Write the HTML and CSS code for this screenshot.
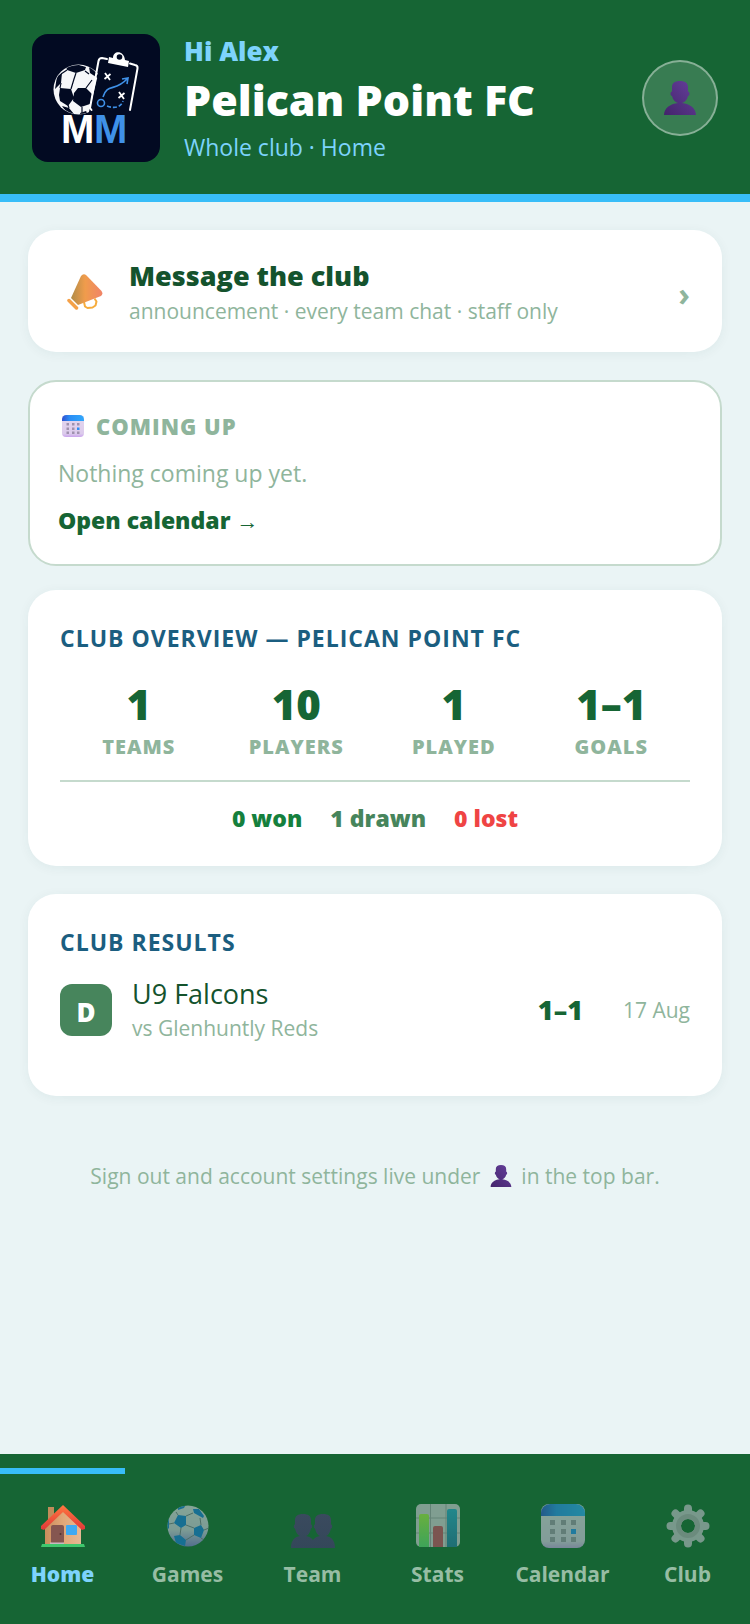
FILE: index.html
```html
<!DOCTYPE html>
<html lang="en">
<head>
  <meta charset="UTF-8" />
  <meta name="viewport" content="width=device-width, initial-scale=1.0"/>
  <title>Pelican Point FC</title>
  <link rel="stylesheet" href="styles.css">
</head>
<body>

  <!-- shared icons -->
  <svg class="sprite" aria-hidden="true">
    <defs>
      <linearGradient id="purple" x1="0" y1="1" x2="1" y2="0">
        <stop offset="0" stop-color="#43246b"/><stop offset="1" stop-color="#66409c"/>
      </linearGradient>
      <linearGradient id="calTop" x1="0" y1="0" x2="1" y2="0">
        <stop offset="0" stop-color="#2f50d0"/><stop offset=".35" stop-color="#2b8df5"/><stop offset="1" stop-color="#30a8fc"/>
      </linearGradient>
      <linearGradient id="calBody" x1="0" y1="0" x2="0" y2="1">
        <stop offset="0" stop-color="#e4d8ee"/><stop offset=".85" stop-color="#dccbec"/><stop offset="1" stop-color="#c9a3ec"/>
      </linearGradient>
    </defs>
    <symbol id="person" viewBox="0 0 32 34">
      <path fill="url(#purple)" d="M8 6C8 2 11 0 16 0s8 2 8 6v4.500c2 0 2 4.500 0 4.500-.8 4-3.500 6.500-6 7 8 .7 14 5.500 14 12H0c0-6.500 6-11.300 14-12-2.500-.5-5.200-3-6-7-2 0-2-4.500 0-4.500z"/>
    </symbol>
    <symbol id="calendar" viewBox="0 0 44 44">
      <rect width="44" height="44" rx="8" fill="url(#calBody)"/>
      <path fill="url(#calTop)" d="M0 12V9a9 9 0 0 1 9-9h26a9 9 0 0 1 9 9v3z"/>
      <path fill="#9f91ae" d="M9 16h5v5H9zM20 16h5v5h-5zM30 16h5v5h-5zM9 25h5v5H9zM20 25h5v5h-5zM9 33h5v5H9zM20 33h5v5h-5zM30 33h5v5h-5z"/>
      <path fill="#2b8df5" d="M30 25h5v5h-5z"/>
    </symbol>
  </svg>

  <header class="topbar">
    <svg class="logo" viewBox="0 0 128 128" role="img" aria-label="Club logo">
      <defs><clipPath id="logoBall"><circle cx="46.500" cy="55.500" r="24.500"/></clipPath></defs>
      <rect width="128" height="128" rx="16" fill="#020a22"/>
      <circle cx="46.500" cy="55.500" r="25" fill="#f6f7f9"/>
      <g clip-path="url(#logoBall)">
        <path fill="#020a22" d="M34 32l10-2 10 3-1 3-9 3-9-3zM25 42l5-3-1 10-6 6zM28 54l11 1 3 9-6 8-8-5-1-6zM46 54l8 0 7 7-3 9-9 3-8-6 1-8zM57 33l10 3v9l-9-6zM30 72l7 2 5 6-5 2zM48 79l6-2 3 5-8 2z"/>
        <path fill="none" stroke="#020a22" stroke-width="1.200" d="M44 39l-2 6-3 10M35 36l-6 4M53 37l4 3M54 54l6-8M29 49l-1 5M37 74l-1-3M50 73v6"/>
      </g>
      <path fill="#020a22" d="M70 24l36 7-9 51H56z"/>
      <path fill="none" stroke="#fff" stroke-width="2" stroke-linecap="round" d="M75 25l-5-1q-3 0-3.500 3L58 74l1.500 2M98 29.500l5 1.500q3 .5 2.500 3.500L98 76"/>
      <path fill="#fff" d="M77 23l4 1c0-8 11-8 12 2l4 1-1 6-20-4z"/>
      <circle cx="87.500" cy="23" r="2.800" fill="#020a22"/>
      <path stroke="#fff" stroke-width="1.800" d="M73 39l5 7M78.500 40l-6 5M87 58l5 7M92.500 59l-6 5"/>
      <g fill="none" stroke="#3f91e8" stroke-width="1.600">
        <path d="M71 63c4-14 12-5 24-18M90 45l6-1-1 6"/>
        <circle cx="69" cy="69" r="3.500"/>
        <path stroke-dasharray="4 2" d="M75 72c8 3 14 1 16-5"/>
      </g>
      <text class="logo-m" x="29" y="109">M</text>
      <text class="logo-m logo-m-blue" x="62" y="109">M</text>
    </svg>
    <div class="club">
      <div class="greeting">Hi Alex</div>
      <h1>Pelican Point FC</h1>
      <div class="scope">Whole club · Home</div>
    </div>
    <button class="account" aria-label="Account"><svg><use href="#person"/></svg></button>
  </header>

  <main>
    <button class="card message">
      <svg class="megaphone" viewBox="0 0 36 36">
        <defs>
          <linearGradient id="horn">
            <stop offset="0" stop-color="#b08c48"/><stop offset=".45" stop-color="#f09c4c"/><stop offset="1" stop-color="#f08468"/>
          </linearGradient>
        </defs>
        <path fill="none" stroke="#f6ac3c" stroke-width="2" stroke-linejoin="round" d="M17 28l1 4.500 2.500 1.500 5-.5 3-2 1-4-2-3"/>
        <path fill="url(#horn)" d="M14 2Q16.500-1 19.500 1.500L34.500 17q2 3-.5 5L11 31 4 24z"/>
        <path fill="none" stroke="#f5a148" stroke-width="3.500" stroke-linecap="round" d="M2 26.500l7.500 7.500"/>
      </svg>
      <span class="message-text">
        <span class="message-title">Message the club</span>
        <span class="small">announcement · every team chat · staff only</span>
      </span>
      <span class="chevron">›</span>
    </button>

    <section class="card upcoming">
      <h2><svg><use href="#calendar"/></svg>COMING UP</h2>
      <p>Nothing coming up yet.</p>
      <a href="#calendar-page">Open calendar <span class="arrow">→</span></a>
    </section>

    <section class="card">
      <h2>CLUB OVERVIEW — PELICAN POINT FC</h2>
      <div class="stats">
        <div class="stat"><b>1</b><span>TEAMS</span></div>
        <div class="stat"><b>10</b><span>PLAYERS</span></div>
        <div class="stat"><b>1</b><span>PLAYED</span></div>
        <div class="stat"><b>1–1</b><span>GOALS</span></div>
      </div>
      <div class="record">
        <span class="won">0 won</span>
        <span class="drawn">1 drawn</span>
        <span class="lost">0 lost</span>
      </div>
    </section>

    <section class="card">
      <h2>CLUB RESULTS</h2>
      <div class="result">
        <span class="badge">D</span>
        <div class="fixture">
          <div class="team">U9 Falcons</div>
          <div class="small">vs Glenhuntly Reds</div>
        </div>
        <span class="score">1–1</span>
        <span class="small">17 Aug</span>
      </div>
    </section>

    <p class="note">Sign out and account settings live under <svg><use href="#person"/></svg> in the top bar.</p>
  </main>

  <nav class="tabs">
    <a class="tab active" href="#home">
      <svg viewBox="0 0 44 44">
        <defs>
          <linearGradient id="wall"><stop offset="0" stop-color="#c98d5c"/><stop offset=".5" stop-color="#e2a878"/><stop offset="1" stop-color="#e6b894"/></linearGradient>
          <linearGradient id="roof" x1="0" y1="0" x2="0" y2="1"><stop offset="0" stop-color="#ff7840"/><stop offset="1" stop-color="#e03838"/></linearGradient>
        </defs>
        <path fill="#c08c5a" d="M7 3h6v18H7z"/>
        <path fill="url(#wall)" d="M4 20L22 4l18 17v20H4z"/>
        <path fill="url(#roof)" d="M22 1l22 21v3l-3 1L22 8 3 26l-3-1v-3z"/>
        <rect x="10" y="21" width="13" height="19" rx="2" fill="#855650"/>
        <circle cx="19.500" cy="30" r="1" fill="#55332e"/>
        <path fill="#c9b8c0" d="M9 38.500h14v2H9z"/>
        <rect x="25" y="21" width="11" height="10" rx="1" fill="#3fa9f2"/>
        <path fill="#3fc76d" d="M1 40h42l1 3H0z"/>
      </svg>
      Home
    </a>
    <a class="tab" href="#games">
      <svg viewBox="0 0 44 44">
        <defs>
          <linearGradient id="ball" x1="0" y1="0" x2="0" y2="1"><stop offset="0" stop-color="#e0d8e8"/><stop offset=".6" stop-color="#d0c8e4"/><stop offset="1" stop-color="#8478d8"/></linearGradient>
          <clipPath id="ballClip"><circle cx="22" cy="22" r="20.500"/></clipPath>
        </defs>
        <circle cx="22" cy="22" r="20.500" fill="url(#ball)"/>
        <g clip-path="url(#ballClip)">
          <path fill="#1878e0" d="M12 11l8 1v9l-5 3-7-5zM27 5l6 0 5 7-1 2-9-5zM28 24l7-3 3 5-3 8-7-3zM8 32l6-1 6 5-1 6-9-3zM1 16l2-4 0 12-2 2zM12 2l8-2-2 4-6 2z"/>
          <path fill="none" stroke="#7a7690" stroke-width="1" d="M20 12l7-3M20 21l8 3M15 24l-1 7M12 11l-2-3M8 19l-5 1M28 31l-8 5M34 14l1 7M38 26l5-2M35 34l3 2"/>
        </g>
      </svg>
      Games
    </a>
    <a class="tab" href="#team">
      <svg class="team-icon" viewBox="0 0 44 44">
        <defs><linearGradient id="duo" x1="0" y1="0" x2="0" y2="1"><stop offset="0" stop-color="#3a4a5e"/><stop offset="1" stop-color="#34475a"/></linearGradient></defs>
        <path id="bust" fill="url(#duo)" d="M4 16c0-4 3-6 8-6s8 2 8 6v4.500c1.500 0 1.500 4 0 4-1 4.500-3 7-5 7.500 5 .8 9 4 9 12H0c0-8 4-11.200 9-12-2-.5-4-3-5-7.500-1.500 0-1.500-4 0-4z"/>
        <use href="#bust" x="20"/>
      </svg>
      Team
    </a>
    <a class="tab" href="#stats">
      <svg viewBox="0 0 44 44">
        <defs>
          <linearGradient id="green" x1="0" y1="0" x2="0" y2="1"><stop offset="0" stop-color="#acec48"/><stop offset="1" stop-color="#60d878"/></linearGradient>
          <linearGradient id="blue" x1="0" y1="0" x2="0" y2="1"><stop offset="0" stop-color="#2ca4d4"/><stop offset="1" stop-color="#2876a8"/></linearGradient>
        </defs>
        <rect y="0" width="44" height="43" rx="5" fill="#d8cede"/>
        <path stroke="#a49cae" stroke-width="1" d="M14.500 0v43M30 0v43M0 14h44M0 29h44"/>
        <path fill="url(#green)" d="M3 43V12q0-2 2-2h6q2 0 2 2v31z"/>
        <path fill="#cf4868" d="M17 43V24q0-2 2-2h6q2 0 2 2v19z"/>
        <path fill="url(#blue)" d="M31 43V7q0-2 2-2h6q2 0 2 2v36z"/>
      </svg>
      Stats
    </a>
    <a class="tab" href="#calendar-page">
      <svg><use href="#calendar"/></svg>
      Calendar
    </a>
    <a class="tab" href="#club">
      <svg viewBox="0 0 44 44">
        <g fill="none" stroke="#c9c2d2">
          <circle cx="22" cy="22" r="11.500" stroke-width="9"/>
          <path stroke-width="8" stroke-linecap="round" d="M22 4.500V9M22 35v4.500M4.500 22H9M35 22h4.500M9.500 9.500l3 3M31.500 31.500l3 3M34.500 9.500l-3 3M12.500 31.500l-3 3"/>
        </g>
        <circle cx="22" cy="22" r="9.500" fill="none" stroke="#b2aaba" stroke-width="5"/>
      </svg>
      Club
    </a>
  </nav>

</body>
</html>
```
FILE: styles.css
```css
* { box-sizing: border-box; }
body {
  margin: 0;
  min-height: 100vh;
  display: flex;
  flex-direction: column;
  font-family: "Segoe UI", "Open Sans", "Noto Sans", sans-serif;
  font-size: 23px;
  line-height: 32px;
  background: #eaf4f5;
  color: #166534;
}
h1, h2, p { margin: 0; }
button { font: inherit; cursor: pointer; }
a { color: inherit; text-decoration: none; }
svg { flex: none; }
.sprite { position: absolute; width: 0; height: 0; }

.topbar {
  display: flex;
  align-items: center;
  gap: 24px;
  padding: 33px 32px 31px;
  background: #166534;
  border-bottom: 8px solid #38bdf8;
  color: #7dd3fc;
}
.logo { width: 128px; height: 128px; }
.logo-m {
  font: bold 40px "Liberation Sans", sans-serif;
  fill: #fff;
}
.logo-m-blue { fill: #3f91e8; }
.club { flex: 1; }
.greeting {
  font-size: 26px;
  line-height: 36px;
  font-weight: 800;
}
h1 {
  font-size: 43px;
  line-height: 62px;
  font-weight: 800;
  color: #fff;
}
.account {
  width: 76px;
  height: 76px;
  display: flex;
  align-items: center;
  justify-content: center;
  padding: 0;
  border-radius: 50%;
  border: 2px solid rgba(255,255,255,0.4);
  background: rgba(255,255,255,0.15);
}
.account svg { width: 32px; height: 34px; }

main {
  flex: 1;
  display: flex;
  flex-direction: column;
  padding: 28px;
}
.card {
  background: #fff;
  border: none;
  border-radius: 28px;
  padding: 32px;
  margin-bottom: 28px;
  box-shadow: 0 2px 12px rgba(22,60,60,0.06);
}
.small {
  font-size: 21px;
  color: #8fb59c;
}
.message {
  display: flex;
  align-items: center;
  padding: 27px 32px 25px;
  gap: 26px;
  text-align: left;
}
.megaphone {
  width: 36px;
  height: 36px;
  margin-left: 7px;
}
.message-text {
  flex: 1;
  display: flex;
  flex-direction: column;
}
.message-title {
  font-size: 27px;
  line-height: 38px;
  font-weight: 800;
  color: #14532d;
}
.chevron {
  padding-top: 4px;
  font-size: 32px;
  font-weight: 700;
  color: #8fb59c;
}

h2 {
  font-size: 23px;
  line-height: 32px;
  font-weight: 700;
  letter-spacing: 1px;
  color: #1b5e80;
}
.upcoming {
  display: flex;
  flex-direction: column;
  gap: 14px;
  padding: 28px;
  margin-bottom: 24px;
  border: 2px solid #c5dacd;
  box-shadow: none;
}
.upcoming h2 {
  display: flex;
  align-items: center;
  gap: 12px;
  padding-left: 4px;
  font-size: 22px;
  font-weight: 800;
  color: #8fb59c;
}
.upcoming h2 svg { width: 22px; height: 22px; }
.upcoming p {
  line-height: 34px;
  color: #8fb59c;
}
.upcoming a { font-weight: 800; }
.arrow {
  font-family: "Liberation Sans", sans-serif;
  font-size: 22px;
  line-height: 1;
  font-weight: 400;
}

.stats {
  display: grid;
  grid-template-columns: repeat(4, 1fr);
  padding: 22px 0 18px;
  border-bottom: 2px solid #c5dacd;
  text-align: center;
}
.stat {
  display: flex;
  flex-direction: column;
}
.stat b {
  font-size: 42px;
  line-height: 56px;
  font-weight: 800;
}
.stat span {
  font-size: 20px;
  line-height: 30px;
  font-weight: 800;
  letter-spacing: 1px;
  color: #8fb59c;
}
.record {
  display: flex;
  justify-content: center;
  gap: 28px;
  padding-top: 20px;
  font-weight: 800;
}
.won { color: #15803d; }
.drawn { color: #47855c; }
.lost { color: #ef4444; }

.result {
  display: flex;
  align-items: center;
  padding: 18px 0 20px;
}
.badge {
  width: 52px;
  height: 52px;
  margin-right: 20px;
  border-radius: 12px;
  background: #47855c;
  color: #fff;
  font-size: 26px;
  line-height: 56px;
  font-weight: 800;
  text-align: center;
}
.fixture { flex: 1; }
.team {
  font-size: 27px;
  line-height: 36px;
  font-weight: 500;
  color: #14532d;
}
.score {
  margin-right: 40px;
  font-size: 27px;
  font-weight: 800;
}
.note {
  margin-top: 36px;
  font-size: 21px;
  text-align: center;
  color: #8fb59c;
}
.note svg {
  width: 22px;
  height: 22px;
  margin: 0 4px;
  vertical-align: -3px;
}

.tabs {
  position: sticky;
  bottom: 0;
  display: flex;
  padding: 14px 0 34px;
  background: #166534;
}
.tab {
  flex: 1;
  display: flex;
  flex-direction: column;
  align-items: center;
  gap: 10px;
  padding-top: 30px;
  border-top: 6px solid transparent;
  font-size: 21px;
  font-weight: 700;
  color: #97bda4;
}
.tab svg {
  width: 44px;
  height: 44px;
  opacity: 0.55;
}
.tab .team-icon { opacity: 1; }
.tab.active {
  border-top-color: #38bdf8;
  font-weight: 800;
  color: #7dd3fc;
}
.tab.active svg { opacity: 1; }
```
